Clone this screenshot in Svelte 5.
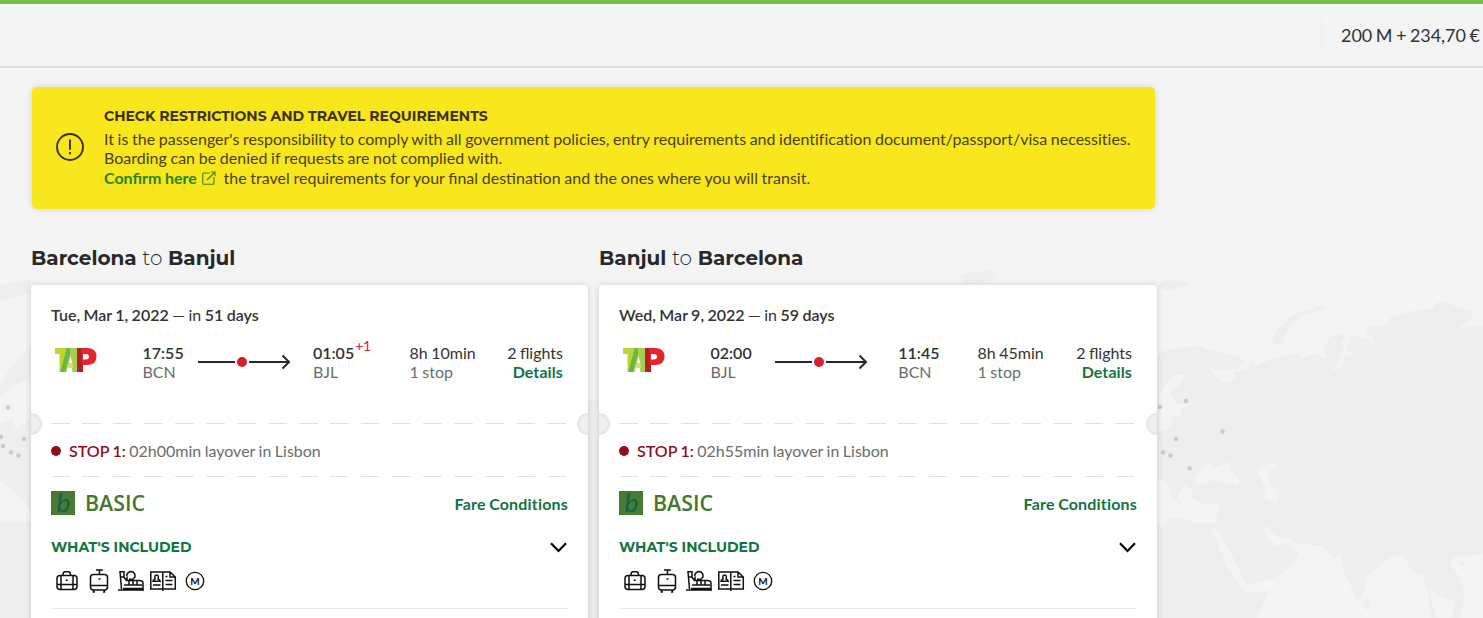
<script>
const total = '200 M + 234,70 €';

const journeys = [
     {
          from: 'Barcelona',
          to: 'Banjul',
          date: 'Tue, Mar 1, 2022',
          days: '51 days',
          depart: '17:55',
          departCode: 'BCN',
          arrive: '01:05',
          plusDay: '+1',
          arriveCode: 'BJL',
          duration: '8h 10min',
          layover: '02h00min layover in Lisbon'
     },
     {
          from: 'Banjul',
          to: 'Barcelona',
          date: 'Wed, Mar 9, 2022',
          days: '59 days',
          depart: '02:00',
          departCode: 'BJL',
          arrive: '11:45',
          plusDay: '',
          arriveCode: 'BCN',
          duration: '8h 45min',
          layover: '02h55min layover in Lisbon'
     }
];

const cities = [
     [1160, 407], [1186, 401], [1222.5, 431.5], [1176, 439], [1163, 452.5], [1170.5, 455.5], [1189.5, 468.5],
     [8, 407.5], [24, 439], [1, 437], [3, 446], [11, 452.5], [18.5, 455.5]
];
</script>

<div class="page">
     <svg class="map" width="1483" height="618" viewBox="0 0 1483 618">
          <g transform="translate(1083 240) scale(.33333)">
               <path class="land" d="M-370 110l30-14 60-4 20 12-30 20-55 8zM235 130l20-8 60 2 8 8-35 12-40 6-20-8zM568 300l15-35 20-10 15-25 30-15 70-18 18 5-30 12-50 15-30 25-20 30-10 30-22-6z"/>
               <path class="land" d="M150 400L225 350 245 332 290 322 345 318 375 330 425 340 465 350 490 365 475 382 495 385 505 360 515 380 550 365 585 352 640 340 655 355 695 340 720 352 733 350 722 325 740 292 775 278 790 290 775 305 782 325 770 360 745 390 770 388 788 365 780 347 815 345 826 368 818 342 785 330 798 310 805 308 795 292 822 288 850 298 875 315 868 290 850 285 855 262 910 255 925 230 1000 210 1050 206 1060 188 1080 184 1120 200 1165 214 1172 235 1110 270 1150 262 1200 258V1134H150z"/>
               <path class="sea" d="M225 510L235 450 270 405 305 405 292 432 260 460 282 492 345 488 295 503 296 530 270 525 265 562 225 575zM378 384l42 10 42-8 18-25 12 28-42 6 8 25-30 12-32-25z"/>
               <path class="sea" d="M220 715l30 10 15 40 28 32-8-36 25-28 18 16-5 25 40 18 47-4-8 60-60 2-42-12-50-5-5 25h-25zM332 730l20-45 28-15 15 12 45-17 2 25 28 30-4 16-75-15-46 14zM520 690l50-24 14 10-30 26 12 36 26 14-10 34-37-8 0-38z"/>
               <path class="sea" d="M385 865l15 2 40 62 50 106 85-22 55-38 18-40-38-27-30 14-38-44-6-22 20 6 32 34 22-6 30 22 75 4 35 36 25-4 5 38 45 103 20-35 5-47 75-57 35-5 30 55 25 3 20 50 10 81H520l40-83-70 8-60-77z"/>
               <path class="sea" d="M1035 1040l30 25 35 15 20-5-15 59h-45zM1200 940l-45 10-42-2-13 23 28 38 18 55-15 70h69z"/>
               <path class="land" d="M1128 965l12-5 8 12-12 8zM845 1075l12 8 5 22-12 8-8-20z"/>
          </g>
          <path class="land" d="M0 286l12-4 18-2v12l-14 6-16 2zM0 385l12-20 14-14 10-5V618H0zM588 400h12v218h-12z"/>
          <path class="sea" d="M0 398l12-12 18-8v40l-14 12-4-12-12 5zM0 480l8 6 22 22v14H0z"/>
          {#each cities as [x, y]}
               <circle cx={x} cy={y} r="2.2" fill="#c9c9c9" />
          {/each}
     </svg>

     <header>
          <div class="total">{total}</div>
     </header>

     <main>
          <section class="alert">
               <svg class="warn" width="30" height="30" viewBox="0 0 30 30" fill="none" stroke="#3a3013" stroke-width="1.9">
                    <circle cx="15" cy="15" r="13" />
                    <path d="M15 7.500v10.200M15 20v2.200" />
               </svg>
               <div>
                    <h2>CHECK RESTRICTIONS AND TRAVEL REQUIREMENTS</h2>
                    <p class="wide">It is the passenger's responsibility to comply with all government policies, entry requirements and identification document/passport/visa necessities.</p>
                    <p>Boarding can be denied if requests are not complied with.</p>
                    <p>
                         <a href="#confirm">Confirm here<svg class="ext" width="14" height="14" viewBox="0 0 14 14" fill="none" stroke="#33851f" stroke-width="1.1"><path d="M8 2H2Q.7 2 .7 3.3V12Q.7 13.3 2 13.3H10.7Q12 13.3 12 12V6M5 9L13 1M9 1h4v4" /></svg></a>
                         the travel requirements for your final destination and the ones where you will transit.
                    </p>
               </div>
          </section>

          <div class="journeys">
               {#each journeys as trip}
                    <section class="journey">
                         <h1>{trip.from} <span>to</span> {trip.to}</h1>
                         <article class="card">
                              <div class="date"><b>{trip.date}</b> — in <b>{trip.days}</b></div>
                              <div class="flight">
                                   <svg class="tap" width="42" height="26" viewBox="0 0 42 26">
                                        <path d="M0 1h15v6H9.500v18H4.500V7H0z" fill="#bdd62f" />
                                        <path d="M11.500 1H22v24h-4.500l-.8-4.500h-4.200l-1 4.500H5.500zM15.500 9l-1.500 7h3z" fill="#a5cf4c" fill-rule="evenodd" />
                                        <path d="M11.500 1L5.500 25h4.500L15 7V1z" fill="#6cb644" />
                                        <path d="M13.200 16.500h4.300l1 4h-6.200z" fill="#d3e27c" />
                                        <path d="M22 1h10q9.500 0 9.500 8.500T32 18h-4v7h-6zM28 7v5.500h3q3-.2 3-2.800T31 7z" fill="#e8252c" fill-rule="evenodd" />
                                        <path d="M22 1h4l2 24h-6z" fill="#b51f29" />
                                   </svg>
                                   <div class="schedule">
                                        <div><b>{trip.depart}</b><br><i>{trip.departCode}</i></div>
                                        <svg class="arrow" width="93" height="16" viewBox="0 0 93 16" fill="none" stroke="#282828" stroke-width="2">
                                             <path d="M0 8h37M51 8h40M84.500 1.500L91 8l-6.500 6.500" />
                                             <circle cx="44" cy="8" r="5" fill="#d91e2e" stroke="none" />
                                        </svg>
                                        <div class:next={trip.plusDay}>
                                             <b>{trip.arrive}</b>{#if trip.plusDay}<sup>{trip.plusDay}</sup>{/if}<br><i>{trip.arriveCode}</i>
                                        </div>
                                   </div>
                                   <div class="duration">{trip.duration}<br><i>1 stop</i></div>
                                   <div class="count">2 flights<br><a href="#details">Details</a></div>
                              </div>
                              <div class="cut"><span class="notch left"></span><div class="dashes"></div><span class="notch right"></span></div>
                              <div class="stop"><span class="dot"></span><b>STOP 1:</b> {trip.layover}</div>
                              <div class="dashes"></div>
                              <div class="fare">
                                   <svg class="brand" width="96" height="24" viewBox="0 0 96 24">
                                        <rect width="24" height="24" fill="#477b35" />
                                        <text x="5.500" y="21" font-family="Lato" font-style="italic" font-size="26" textLength="14" lengthAdjust="spacingAndGlyphs" fill="#146248">b</text>
                                        <text x="34" y="20" font-family="Open Sans" font-weight="600" font-size="22" textLength="60" lengthAdjust="spacingAndGlyphs" fill="#44782f">BASIC</text>
                                   </svg>
                                   <a href="#fare">Fare Conditions</a>
                              </div>
                              <div class="included">
                                   <h3>WHAT'S INCLUDED</h3>
                                   <svg width="18" height="12" viewBox="0 0 18 12" fill="none" stroke="#000" stroke-width="2.2"><path d="M1 2.300l7.500 7.700L16 2.300" /></svg>
                              </div>
                              <svg class="perks" width="160" height="26" viewBox="0 0 160 26" fill="none" stroke="#111" stroke-width="1.500">
                                   <!-- cabin bag -->
                                   <rect x="6" y="7.500" width="20" height="14" rx="3" />
                                   <path d="M12 7Q12 3.700 14 3.700h3.500Q19.500 3.700 19.500 7M10 7.500V21.500M22 7.500V21.500M6 16.500h20M14.800 12.200h2" />
                                   <!-- trolley -->
                                   <rect x="39.500" y="6.500" width="17" height="15.500" rx="3" />
                                   <path d="M45 2h7M48.500 2v4.500M39.500 17.500h17M47.500 11h2M42.500 22v2h1.500M53.500 22v2h-1.500" />
                                   <!-- seat on a luggage belt -->
                                   <path d="M67 22h26M70.500 21L69 3.700h4v5.500l2.500 3.300H89q3 0 3 3v5H72M69.500 9h4M76 12V8.500M75.500 8q1-4.500 5-4.500 4 1 3.500 5.500l-2.500 2.500-3.500-.5M73 17h18M78 13v4M82 13v4M86 13v4M76 20v2M81 20v2M86 20v2" />
                                   <!-- documents -->
                                   <path d="M99.800 4h12v17h-12zM111.800 4H119l5.300 5v12h-12.500M119 4v5h5M102 13.300q0-1.500 2-2-.8-4.300 1.600-4.300t1.600 4.300q2 .5 2 2zM102 17h7.500M114.500 8.500h2M114.500 12.500h7M114.500 16.500h7M111.800 20v3" />
                                   <!-- miles -->
                                   <circle cx="144" cy="13" r="8.700" stroke-width="1.300" />
                                   <text x="144" y="16.600" text-anchor="middle" font-family="Lato" font-weight="700" font-size="10" fill="#111" stroke="none">M</text>
                              </svg>
                              <hr>
                         </article>
                    </section>
               {/each}
          </div>
     </main>
</div>

<style>
     :global(body) {
          background: #f4f4f4;
          overflow: hidden;
     }
     .page {
          position: relative;
          height: 618px;
          overflow: hidden;
          background: #f4f4f4;
          color: #333;
          font: 16px/19px Lato, sans-serif;
          word-spacing: -.6px;
     }
     .map {
          position: absolute;
          left: 0;
          top: 0;
     }
     .land {
          fill: #eee;
     }
     .sea {
          fill: #f4f4f4;
     }
     header {
          position: relative;
          box-sizing: border-box;
          height: 68px;
          border-top: 4px solid #72bf44;
          border-bottom: 2px solid #dcdcdc;
          display: flex;
          justify-content: flex-end;
          align-items: center;
          background: #f4f4f4;
     }
     .total {
          width: 142px;
          height: 32px;
          padding-left: 19px;
          border-left: 1px solid #ececec;
          font-size: 18px;
          line-height: 32px;
          letter-spacing: -.05px;
          word-spacing: -1px;
          white-space: nowrap;
     }
     main {
          position: relative;
          padding: 19px 0 0 31px;
     }
     h1, h2, h3, p {
          margin: 0;
     }
     h1, h2, h3 {
          font-family: Montserrat, Inter, sans-serif;
          word-spacing: 0;
     }
     a {
          color: #12753f;
          font-weight: 700;
          text-decoration: none;
     }
     i {
          font-style: normal;
          color: #6c6c6c;
     }
     b {
          font-weight: 600;
     }
     .alert {
          box-sizing: border-box;
          width: 1123px;
          height: 122px;
          margin-left: 1px;
          padding: 19px 0 0 23px;
          display: flex;
          gap: 19px;
          border-radius: 5px;
          background: #f8e71c;
          box-shadow: 0 0 6px rgba(0, 0, 0, .13);
          color: #4a3f14;
     }
     .warn {
          margin-top: 26px;
     }
     .alert h2 {
          margin-bottom: 3px;
          font-size: 14px;
          line-height: 20px;
          font-weight: 700;
          color: #3a3013;
     }
     .alert p {
          line-height: 19.4px;
          word-spacing: -.4px;
          white-space: nowrap;
     }
     .alert .wide {
          font-variant-ligatures: none;
          word-spacing: -.5px;
          letter-spacing: .005px;
     }
     .alert a {
          color: #27851e;
     }
     .ext {
          margin: 0 4px -1px 5px;
     }
     .journeys {
          display: flex;
          gap: 11px;
          margin-top: 35px;
     }
     .journey {
          width: 557px;
     }
     .journey:last-child {
          width: 558px;
     }
     h1 {
          position: relative;
          top: 1px;
          margin-bottom: 14px;
          font-size: 20px;
          line-height: 27px;
          font-weight: 700;
          color: #282828;
     }
     h1 span {
          font-weight: 300;
     }
     .card {
          box-sizing: border-box;
          height: 345px;
          padding: 20px 20px 0;
          border-radius: 4px;
          background: #fff;
          box-shadow: 0 0 6px rgba(0, 0, 0, .16);
     }
     .flight {
          display: flex;
          height: 80px;
          margin-top: 19px;
     }
     .tap {
          margin: 4px 45.5px 0 4px;
     }
     .schedule {
          display: flex;
          justify-content: space-between;
          width: 229px;
     }
     .arrow {
          margin: 11px 7px 0 0;
     }
     .next {
          width: 58.5px;
          white-space: nowrap;
     }
     sup {
          position: relative;
          top: -8px;
          margin-left: 1px;
          font-size: 14px;
          line-height: 0;
          letter-spacing: -.4px;
          vertical-align: baseline;
          color: #d5203b;
     }
     .duration {
          margin-left: 38px;
          white-space: nowrap;
     }
     .count {
          margin: 0 5px 0 auto;
          text-align: right;
     }
     .count a {
          letter-spacing: .1px;
     }
     .cut {
          display: flex;
          align-items: center;
          height: 1px;
          margin: 0 -20px;
     }
     .dashes {
          flex: 1;
          height: 1px;
          background: repeating-linear-gradient(90deg, #e2e2e2 0 19px, transparent 19px 31px);
     }
     .notch {
          box-sizing: border-box;
          width: 11px;
          height: 22px;
          border: 1px solid #e6e6e6;
          background: #f0f0f0;
     }
     .left {
          margin-right: 9px;
          border-left: 0;
          border-radius: 0 11px 11px 0;
          box-shadow: inset -1px 0 3px rgba(0, 0, 0, .06);
     }
     .right {
          margin-left: 9px;
          border-right: 0;
          border-radius: 11px 0 0 11px;
          box-shadow: inset 1px 0 3px rgba(0, 0, 0, .06);
     }
     .stop {
          display: flex;
          align-items: center;
          height: 52px;
          color: #6c6c6c;
          white-space: pre;
     }
     .stop b {
          color: #8e0f1f;
     }
     .dot {
          width: 10px;
          height: 10px;
          margin: 2px 8px 0 0;
          border-radius: 50%;
          background: #8e0f1f;
     }
     .fare {
          display: flex;
          justify-content: space-between;
          align-items: center;
          margin-top: 14px;
     }
     .fare a {
          margin-top: 1px;
          font-variant-ligatures: none;
          letter-spacing: .18px;
     }
     .brand {
          overflow: visible;
     }
     .included {
          display: flex;
          justify-content: space-between;
          align-items: center;
          height: 24px;
          margin-top: 20px;
     }
     h3 {
          font-size: 14px;
          font-weight: 700;
          color: #12753f;
     }
     .perks {
          display: block;
          margin-top: 9px;
     }
     hr {
          height: 1px;
          margin: 14px 0 0;
          border: 0;
          background: #e8e8e8;
     }
</style>
